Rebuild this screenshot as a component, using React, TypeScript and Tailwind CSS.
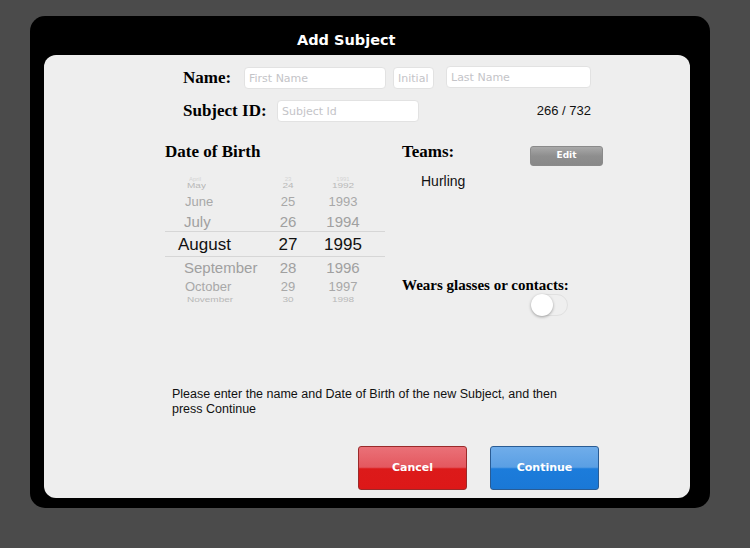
const serif = "font-['Liberation_Serif',serif] font-bold text-black";
const verdana = "font-['DejaVu_Sans',Verdana,sans-serif]";
const helv = "font-['Liberation_Sans',Arial,sans-serif]";

type Row = { m: string; d: string; y: string; h: string; size: string; color: string; pl: string; squash?: boolean };

const rows: Row[] = [
  { m: "April", d: "23", y: "1991", h: "h-[5px]", size: "text-[6px]", color: "text-[#d4d4d4]", pl: "pl-[24px]", squash: true },
  { m: "May", d: "24", y: "1992", h: "h-[10px]", size: "text-[10px]", color: "text-[#b8b8b8]", pl: "pl-[22px]", squash: true },
  { m: "June", d: "25", y: "1993", h: "h-[20px]", size: "text-[13px]", color: "text-[#a8a8a8]", pl: "pl-[20px]" },
  { m: "July", d: "26", y: "1994", h: "h-[20px]", size: "text-[15px]", color: "text-[#a0a0a0]", pl: "pl-[19px]" },
  { m: "August", d: "27", y: "1995", h: "h-[26px]", size: "text-[17px]", color: "text-[#111]", pl: "pl-[13px]" },
  { m: "September", d: "28", y: "1996", h: "h-[20px]", size: "text-[15px]", color: "text-[#a0a0a0]", pl: "pl-[19px]" },
  { m: "October", d: "29", y: "1997", h: "h-[18px]", size: "text-[13px]", color: "text-[#a8a8a8]", pl: "pl-[20px]" },
  { m: "November", d: "30", y: "1998", h: "h-[10px]", size: "text-[10px]", color: "text-[#b8b8b8]", pl: "pl-[22px]", squash: true },
];

const Picker = () => (
  <div className={`mt-[13px] flex h-[129px] w-[220px] flex-col overflow-hidden ${helv}`}>
    {rows.map((r) => (
      <div
        key={r.m}
        className={`flex shrink-0 items-center ${r.h} ${r.size} ${r.color} ${
          r.m === "August" ? "border-y border-[#d6d6d6]" : ""
        }`}
      >
        <div className={`w-[99px] ${r.pl} leading-none ${r.squash ? "scale-y-75" : ""}`}>{r.m}</div>
        <div className={`w-[48px] text-center leading-none ${r.squash ? "scale-y-75" : ""}`}>{r.d}</div>
        <div className={`w-[62px] text-center leading-none ${r.squash ? "scale-y-75" : ""}`}>{r.y}</div>
      </div>
    ))}
  </div>
);

const Field = ({ placeholder, cls }: { placeholder: string; cls: string }) => (
  <input
    placeholder={placeholder}
    className={`block h-[22px] ${cls} rounded-[4px] border border-[#e2e2e2] bg-white px-[4px] text-[11px] text-black placeholder:text-[#c4c4c8] outline-none ${verdana}`}
  />
);

export default function App() {
  return (
    <div className="flex h-[548px] w-[750px] items-start bg-[#4b4b4b] pl-[30px] pt-[16px]">
      <div className="flex h-[492px] w-[680px] flex-col rounded-[15px] bg-black pb-[10px] pl-[14px] pr-[20px]">
        <div className={`flex h-[39px] shrink-0 items-center pl-[253px] pt-[10px] text-[14.5px] font-bold text-white ${verdana}`}>
          Add Subject
        </div>
        <div className="flex flex-1 flex-col rounded-[12px] bg-[#eeeeee] pl-[121px] pt-[12px]">
          <div className="ml-[18px] flex h-[22px] w-[408px] items-center">
            <span className={`${serif} w-[61px] text-[17px]`}>Name:</span>
            <Field placeholder="First Name" cls="w-[142px]" />
            <Field placeholder="Initial" cls="ml-[7px] w-[41px]" />
            <Field placeholder="Last Name" cls="ml-[12px] -mt-[2px] w-[145px]" />
          </div>
          <div className="ml-[18px] mt-[11px] flex h-[22px] w-[408px] items-center">
            <span className={`${serif} w-[94px] text-[17px]`}>Subject ID:</span>
            <Field placeholder="Subject Id" cls="w-[142px]" />
            <span className={`ml-auto text-[13px] text-[#111] ${helv}`}>266 / 732</span>
          </div>

          <div className="mt-[19px] flex">
            <div className="flex w-[237px] flex-col">
              <span className={`${serif} text-[17px] leading-[22px]`}>Date of Birth</span>
              <Picker />
            </div>
            <div className="flex w-[201px] flex-col">
              <div className="flex items-start justify-between">
                <span className={`${serif} text-[17px] leading-[22px]`}>Teams:</span>
                <button
                  className={`mt-[5px] h-[20px] w-[73px] rounded-[3px] border border-[#8a8a8a] bg-gradient-to-b from-[#a9a9a9] via-[#8e8e8e] to-[#888] text-[9px] font-bold text-white ${verdana}`}
                >
                  Edit
                </button>
              </div>
              <span className={`ml-[19px] mt-[7px] text-[14px] leading-[16px] text-[#111] ${helv}`}>Hurling</span>
              <span className={`${serif} mt-[87px] text-[15px] leading-[18px]`}>Wears glasses or contacts:</span>
              <div className="ml-[129px] flex h-[22px] w-[37px] items-center rounded-full border border-[#e0e0e0] bg-[#efefef]">
                <div className="-ml-[1px] h-[22px] w-[22px] rounded-full bg-white shadow-[0_1px_3px_rgba(0,0,0,0.35)]" />
              </div>
            </div>
          </div>

          <p className={`ml-[7px] mt-[71px] w-[395px] text-[12.5px] leading-[15px] text-[#111] ${helv}`}>
            Please enter the name and Date of Birth of the new Subject, and then press Continue
          </p>

          <div className="ml-[193px] mt-[29px] flex gap-[23px]">
            <button
              className={`h-[44px] w-[109px] rounded-[3px] border border-[#9a2a2a] bg-[linear-gradient(#ea7178,#e4585f_48%,#dc1a1a_52%,#dd1818)] text-[11px] font-bold text-white ${verdana}`}
            >
              Cancel
            </button>
            <button
              className={`h-[44px] w-[109px] rounded-[3px] border border-[#2a5c94] bg-[linear-gradient(#70adea,#5a9fe4_48%,#1c7cdb_52%,#1a78d6)] text-[11px] font-bold text-white ${verdana}`}
            >
              Continue
            </button>
          </div>
        </div>
      </div>
    </div>
  );
}
